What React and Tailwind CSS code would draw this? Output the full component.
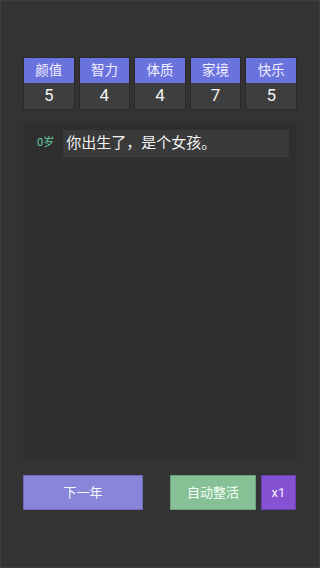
const stats = [
  { label: "颜值", value: 5 },
  { label: "智力", value: 4 },
  { label: "体质", value: 4 },
  { label: "家境", value: 7 },
  { label: "快乐", value: 5 },
];

function App() {
  return (
    <div
      className="w-[320px] h-[568px] bg-[#333333] border border-[#3d3d3d] flex flex-col px-[22px] pt-[56px]"
      style={{ fontFamily: 'Roboto, "Noto Sans CJK SC", sans-serif' }}
    >
      <div className="grid grid-cols-5 gap-1">
        {stats.map((s) => (
          <div key={s.label} className="flex flex-col border border-[#2a2a2a]">
            <div className="h-[25px] bg-[#6a72de] text-[#f0f0ff] text-[13.5px] flex items-center justify-center">
              {s.label}
            </div>
            <div className="h-[26px] bg-[#3e3e3e] text-[#f2f2f2] text-[17px] flex items-center justify-center">
              {s.value}
            </div>
          </div>
        ))}
      </div>

      <div className="mt-[12px] h-[338px] bg-[#2f2f2f] pt-[8px] pl-[14px] pr-[8px]">
        <div className="flex items-center gap-[9px]">
          <span className="text-[11px] text-[#66ccaa]">0岁</span>
          <div className="flex-1 h-[27px] bg-[#3a3a3a] text-[#f2f2f2] text-[15px] flex items-center pl-[3px]">
            你出生了，是个女孩。
          </div>
        </div>
      </div>

      <div className="mt-[15px] flex items-center">
        <button className="w-[120px] h-[35px] bg-[#8985d8] border border-[#6e6ab8] text-[#f5f5ff] text-[13px]">
          下一年
        </button>
        <button className="ml-[27px] w-[86px] h-[35px] bg-[#86c196] border border-[#6aa07a] text-[#f5fff7] text-[13px]">
          自动整活
        </button>
        <button className="ml-[5px] w-[35px] h-[35px] bg-[#8452d2] border border-[#6a3fb0] text-[#f5f0ff] text-[13px]">
          x1
        </button>
      </div>
    </div>
  );
}

export default App;
